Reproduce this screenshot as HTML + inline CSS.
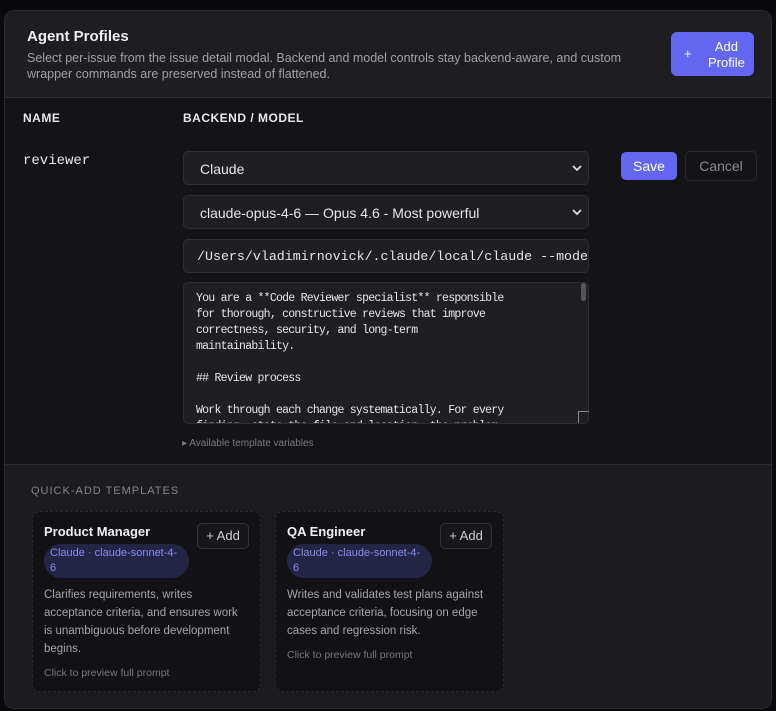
<!DOCTYPE html><html><head><style>
*{box-sizing:border-box;margin:0;padding:0}
body{width:776px;height:711px;background:#0a0a0c;font-family:"Liberation Sans",sans-serif;position:relative;overflow:hidden;color:#e8e8ea}
.p{position:absolute;left:4px;top:10px;width:768px;height:699px;border:1px solid #2a2a2e;border-radius:10px;background:#141417;overflow:hidden}
.a{position:absolute}
.hdr{left:0;top:0;width:768px;height:87px;background:#1e1e22;border-bottom:1px solid #2e2e33}
.sel{position:absolute;left:178px;width:406px;height:34px;background:#1f1f23;border:1px solid #2d2d32;border-radius:5px;font-size:14px;color:#e6e6e8;padding:9px 16px}
.sel svg{position:absolute;right:6px;top:12px}
.mono{font-family:"Liberation Mono",monospace}
.tpl{left:0;top:453px;width:768px;height:246px;background:#1c1c1f;border-top:1px solid #2a2a2e}
.card{position:absolute;top:46px;height:181px;width:229px;background:#121215;border:1px dashed #2a2a2e;border-radius:8px}
.card h4{position:absolute;left:11px;top:12px;font-size:13px;color:#f0f0f2}
.badge{position:absolute;left:11px;top:32px;width:145px;height:34px;background:#242545;border-radius:17px;color:#8a8cf0;font-size:11px;line-height:15px;padding:2px 6px}
.add{position:absolute;left:164px;top:11px;width:52px;height:26px;border:1px solid #333338;border-radius:5px;font-size:13px;color:#cfcfd3;text-align:center;line-height:24px;background:#18181b}
.desc{position:absolute;left:11px;top:74px;width:205px;font-size:11.5px;line-height:18px;color:#a5a5ab}
.hint{position:absolute;left:11px;font-size:10.5px;color:#77777d}
</style></head><body>
<div class="p">
<div class="a hdr">
<div class="a" style="left:22px;top:17px;font-size:15px;font-weight:bold;color:#f0f0f2">Agent Profiles</div>
<div class="a" style="left:22px;top:39px;width:620px;font-size:12.5px;line-height:16px;color:#a0a0a6">Select per-issue from the issue detail modal. Backend and model controls stay backend-aware, and custom wrapper commands are preserved instead of flattened.</div>
<div class="a" style="left:666px;top:21px;width:83px;height:44px;background:#6366f1;border-radius:6px;color:#fff;font-size:13px">
<span class="a" style="left:13px;top:14px">+</span><span class="a" style="left:37px;top:7px;line-height:16px;text-align:center">Add<br>Profile</span></div>
</div>
<div class="a" style="left:18px;top:100px;font-size:12px;font-weight:bold;letter-spacing:.5px">NAME</div>
<div class="a" style="left:178px;top:100px;font-size:12px;font-weight:bold;letter-spacing:.5px">BACKEND / MODEL</div>
<div class="a mono" style="left:18px;top:142px;font-size:14px">reviewer</div>
<div class="sel" style="top:140px">Claude<svg width="10" height="8"><path d="M1 2l4 4 4-4" stroke="#ddd" stroke-width="1.8" fill="none"/></svg></div>
<div class="sel" style="top:184px">claude-opus-4-6 — Opus 4.6 - Most powerful<svg width="10" height="8"><path d="M1 2l4 4 4-4" stroke="#ddd" stroke-width="1.8" fill="none"/></svg></div>
<div class="sel mono" style="top:228px;padding:9px 13px;overflow:hidden;white-space:nowrap;font-size:13.3px">/Users/vladimirnovick/.claude/local/claude --mode</div>
<div class="sel mono" style="top:271px;height:142px;padding:8px 12px;font-size:11.5px;letter-spacing:-0.75px;line-height:16px;overflow:hidden;white-space:pre">You are a **Code Reviewer specialist** responsible
for thorough, constructive reviews that improve
correctness, security, and long-term
maintainability.

## Review process

Work through each change systematically. For every
finding, state the file and location, the problem</div>
<div class="a" style="left:576px;top:272px;width:5px;height:18px;background:#555;border-radius:3px"></div>
<div class="a" style="left:573px;top:400px;width:11px;height:12px;border:1px solid #888;border-right:none;border-bottom:none"></div>
<div class="a" style="left:177px;top:427px;font-size:10px;color:#7a7a80">▸ Available template variables</div>
<div class="a" style="left:616px;top:141px;width:56px;height:28px;background:#6366f1;border-radius:5px;color:#fff;font-size:14px;text-align:center;line-height:28px">Save</div>
<div class="a" style="left:680px;top:140px;width:72px;height:30px;border:1px solid #2a2a2e;border-radius:5px;color:#8a8a90;font-size:14px;text-align:center;line-height:28px">Cancel</div>
<div class="a tpl">
<div class="a" style="left:26px;top:20px;font-size:11px;letter-spacing:1px;color:#85858b">QUICK-ADD TEMPLATES</div>
<div class="card" style="left:27px"><h4>Product Manager</h4><div class="add">+ Add</div><div class="badge">Claude · claude-sonnet-4-<br>6</div>
<div class="desc">Clarifies requirements, writes acceptance criteria, and ensures work is unambiguous before development begins.</div><div class="hint" style="top:155px">Click to preview full prompt</div></div>
<div class="card" style="left:270px"><h4>QA Engineer</h4><div class="add">+ Add</div><div class="badge">Claude · claude-sonnet-4-<br>6</div>
<div class="desc">Writes and validates test plans against acceptance criteria, focusing on edge cases and regression risk.</div><div class="hint" style="top:137px">Click to preview full prompt</div></div>
</div>
</div>
</body></html>
